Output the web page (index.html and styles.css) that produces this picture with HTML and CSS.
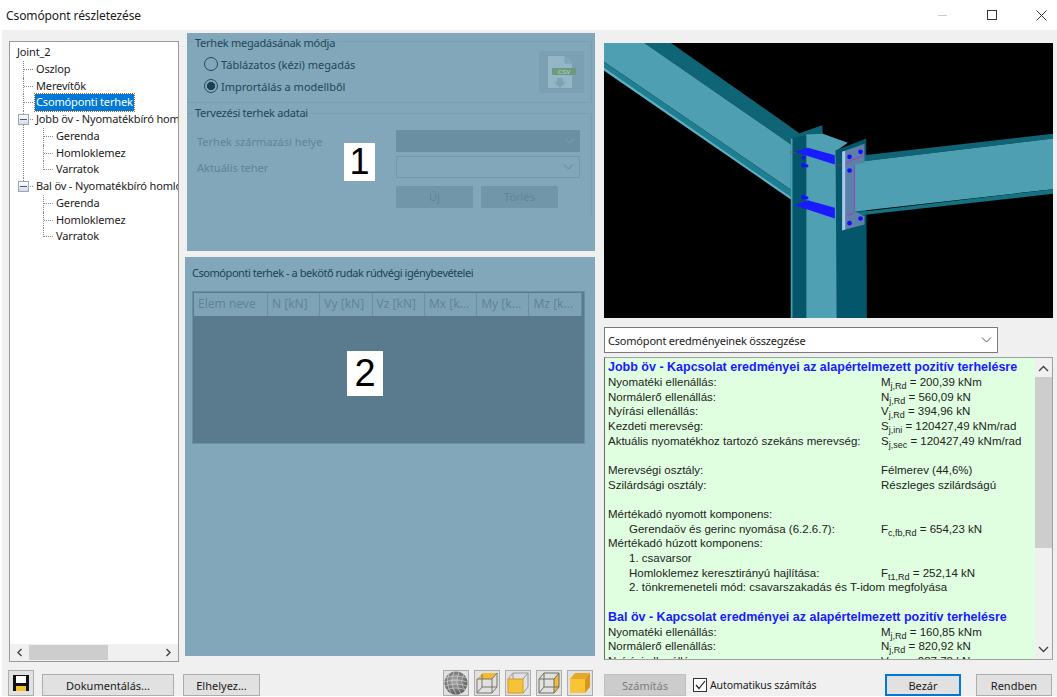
FILE: index.html
```html
<!DOCTYPE html>
<html lang="en">
<head>
    <meta charset="UTF-8">
    <title>Csomópont részletezése</title>
    <link rel="stylesheet" href="styles.css">
</head>
<body>
    <header class="titlebar">
        <span class="title">Csomópont részletezése</span>
        <div class="winbtns">
            <span class="minimize"></span>
            <span class="maximize"></span>
            <svg class="close" width="11" height="11" viewBox="0 0 11 11"><path d="M0.5 0.5L10.5 10.5M10.5 0.5L0.5 10.5" stroke="#333" fill="none"/></svg>
        </div>
    </header>

    <div class="client">
        <div class="main">
            <div class="tree">
                <div class="tree-list">
                    <div class="root">Joint_2</div>
                    <ul class="branch">
                        <li><span class="node">Oszlop</span></li>
                        <li><span class="node">Merevítők</span></li>
                        <li><span class="node selected">Csomóponti terhek</span></li>
                        <li>
                            <span class="expander"></span>
                            <span class="node">Jobb öv - Nyomatékbíró homloklemezes</span>
                            <ul class="subbranch">
                                <li><span class="node">Gerenda</span></li>
                                <li><span class="node">Homloklemez</span></li>
                                <li><span class="node">Varratok</span></li>
                            </ul>
                        </li>
                        <li>
                            <span class="expander"></span>
                            <span class="node">Bal öv - Nyomatékbíró homloklemezes</span>
                            <ul class="subbranch">
                                <li><span class="node">Gerenda</span></li>
                                <li><span class="node">Homloklemez</span></li>
                                <li><span class="node">Varratok</span></li>
                            </ul>
                        </li>
                    </ul>
                </div>
                <div class="hscroll">
                    <svg width="7" height="9" viewBox="0 0 7 9"><path d="M5.5 1L2 4.5L5.5 8" stroke="#444" stroke-width="1.4" fill="none"/></svg>
                    <div class="hthumb"></div>
                    <svg width="7" height="9" viewBox="0 0 7 9"><path d="M1.5 1L5 4.5L1.5 8" stroke="#444" stroke-width="1.4" fill="none"/></svg>
                </div>
            </div>

            <div class="middle">
                <section class="panel panel-one">
                    <div class="group group-mode">
                        <span class="legend">Terhek megadásának módja</span>
                        <div class="mode-row">
                            <div class="radios">
                                <div class="radio-row"><span class="radio"></span>Táblázatos (kézi) megadás</div>
                                <div class="radio-row"><span class="radio checked"></span>Imprortálás a modellből</div>
                            </div>
                            <div class="csv-btn">
                                <svg width="30" height="34" viewBox="0 0 30 34">
                                    <path d="M1 1H18L25 8V33H1Z" fill="#94b6c6"/>
                                    <path d="M18 1V8H25" fill="#82a7ba" stroke="#7ba0b3"/>
                                    <rect x="5" y="13" width="24" height="7" fill="#6d9a7f"/>
                                    <text x="17" y="19" class="csv-text">CSV</text>
                                    <path d="M10 23H16V27H19L13 33L7 27H10Z" fill="#7ea3b5"/>
                                </svg>
                            </div>
                        </div>
                    </div>
                    <div class="group group-data">
                        <span class="legend">Tervezési terhek adatai</span>
                        <div class="form-row">
                            <span class="form-label">Terhek származási helye</span>
                            <div class="fake-select filled"><svg width="11" height="6" viewBox="0 0 11 6"><path d="M1 0.5L5.5 5L10 0.5" stroke="#7f9fb0" fill="none"/></svg></div>
                        </div>
                        <div class="form-row">
                            <span class="form-label">Aktuális teher</span>
                            <div class="fake-select outlined"><svg width="11" height="6" viewBox="0 0 11 6"><path d="M1 0.5L5.5 5L10 0.5" stroke="#5f8496" fill="none"/></svg></div>
                        </div>
                        <div class="form-btns">
                            <span class="dim-btn">Új</span>
                            <span class="dim-btn">Törlés</span>
                        </div>
                    </div>
                    <div class="callout callout-one">1</div>
                </section>

                <section class="panel panel-two">
                    <div class="panel-title">Csomóponti terhek - a bekötő rudak rúdvégi igénybevételei</div>
                    <div class="grid-box">
                        <div class="grid-head">
                            <span class="col-name">Elem neve</span>
                            <span>N [kN]</span>
                            <span>Vy [kN]</span>
                            <span>Vz [kN]</span>
                            <span>Mx [k...</span>
                            <span>My [k...</span>
                            <span>Mz [k...</span>
                        </div>
                    </div>
                    <div class="callout callout-two">2</div>
                </section>
            </div>

            <div class="right">
                <div class="viewport">
                    <svg width="449" height="275" viewBox="14 26 1346 824">
                        <rect x="14" y="26" width="1346" height="824" fill="#000"/>
                        <!-- left beam -->
                        <polygon points="135,26 215,26 600,296 578,332" fill="#0f6475"/>
                        <polygon points="14,26 135,26 578,332 578,468 14,82" fill="#4d9fb1"/>
                        <polygon points="14,82 578,468 578,497 14,108" fill="#1f7f92"/>
                        <polygon points="14,100 578,490 578,497 14,108" fill="#5fb0c0"/>
                        <!-- column -->
                        <polygon points="582,310 600,296 668,272 670,302 620,306" fill="#0d6474"/>
                        <polygon points="620,300 670,298 745,325 712,348 712,850 620,850" fill="#4fa0b2"/>
                        <polygon points="574,312 620,302 620,850 574,850" fill="#04566a"/>
                        <rect x="574" y="312" width="5" height="538" fill="#4d9fb1"/>
                        <polygon points="708,348 800,312 802,850 712,850" fill="#04566a"/>
                        <!-- right beam -->
                        <polygon points="760,366 1360,298 1360,312 760,384" fill="#0f6475"/>
                        <polygon points="760,384 1360,312 1360,464 760,532" fill="#4d9fb1"/>
                        <polygon points="750,536 1360,464 1360,478 750,546" fill="#15707f"/>
                        <!-- end plate -->
                        <polygon points="728,352 795,328 795,385 765,390 765,530 795,545 795,570 728,588" fill="#5d80a8"/>
                        <polygon points="728,352 737,349 737,585 728,588" fill="#a9c8f0"/>
                        <path d="M765 392V528M740 384L800 360M742 543L765 535" stroke="#c020d0" stroke-width="2" fill="none"/>
                        <path d="M574 352L590 356M706 391L728 392" stroke="#b03040" stroke-width="2" fill="none"/>
                        <!-- stiffeners and bolts -->
                        <polygon points="585,352 625,340 706,362 706,390" fill="#1a1aff"/>
                        <polygon points="585,512 625,497 706,520 706,552" fill="#1a1aff"/>
                        <g fill="#1010ff">
                            <circle cx="750" cy="367" r="7"/>
                            <circle cx="783" cy="352" r="7"/>
                            <circle cx="750" cy="408" r="7"/>
                            <circle cx="750" cy="566" r="7"/>
                            <circle cx="783" cy="552" r="7"/>
                            <circle cx="612" cy="392" r="7"/>
                            <circle cx="622" cy="394" r="5"/>
                            <circle cx="612" cy="488" r="7"/>
                            <circle cx="622" cy="490" r="5"/>
                            <circle cx="612" cy="370" r="6"/>
                        </g>
                    </svg>
                </div>
                <div class="combo">
                    <span>Csomópont eredményeinek összegzése</span>
                    <svg width="11" height="6" viewBox="0 0 11 6"><path d="M1 0.5L5.5 5L10 0.5" stroke="#555" fill="none"/></svg>
                </div>
                <div class="results">
                    <div class="results-text">
                        <div class="res-head">Jobb öv - Kapcsolat eredményei az alapértelmezett pozitív terhelésre</div>
                        <div class="res-row"><span class="res-label">Nyomatéki ellenállás:</span><span>M<sub>j,Rd</sub> = 200,39 kNm</span></div>
                        <div class="res-row"><span class="res-label">Normálerő ellenállás:</span><span>N<sub>j,Rd</sub> = 560,09 kN</span></div>
                        <div class="res-row"><span class="res-label">Nyírási ellenállás:</span><span>V<sub>j,Rd</sub> = 394,96 kN</span></div>
                        <div class="res-row"><span class="res-label">Kezdeti merevség:</span><span>S<sub>j,ini</sub> = 120427,49 kNm/rad</span></div>
                        <div class="res-row"><span class="res-label">Aktuális nyomatékhoz tartozó szekáns merevség:</span><span>S<sub>j,sec</sub> = 120427,49 kNm/rad</span></div>
                        <div class="res-row"></div>
                        <div class="res-row"><span class="res-label">Merevségi osztály:</span><span>Félmerev (44,6%)</span></div>
                        <div class="res-row"><span class="res-label">Szilárdsági osztály:</span><span>Részleges szilárdságú</span></div>
                        <div class="res-row"></div>
                        <div class="res-row"><span class="res-label">Mértékadó nyomott komponens:</span></div>
                        <div class="res-row"><span class="res-label indent">Gerendaöv és gerinc nyomása (6.2.6.7):</span><span>F<sub>c,fb,Rd</sub> = 654,23 kN</span></div>
                        <div class="res-row"><span class="res-label">Mértékadó húzott komponens:</span></div>
                        <div class="res-row"><span class="res-label indent">1. csavarsor</span></div>
                        <div class="res-row"><span class="res-label indent">Homloklemez keresztirányú hajlítása:</span><span>F<sub>t1,Rd</sub> = 252,14 kN</span></div>
                        <div class="res-row"><span class="indent">2. tönkremeneteli mód: csavarszakadás és T-idom megfolyása</span></div>
                        <div class="res-row"></div>
                        <div class="res-head">Bal öv - Kapcsolat eredményei az alapértelmezett pozitív terhelésre</div>
                        <div class="res-row"><span class="res-label">Nyomatéki ellenállás:</span><span>M<sub>j,Rd</sub> = 160,85 kNm</span></div>
                        <div class="res-row"><span class="res-label">Normálerő ellenállás:</span><span>N<sub>j,Rd</sub> = 820,92 kN</span></div>
                        <div class="res-row"><span class="res-label">Nyírási ellenállás:</span><span>V<sub>j,Rd</sub> = 287,78 kN</span></div>
                    </div>
                    <div class="vscroll">
                        <svg width="11" height="7" viewBox="0 0 11 7"><path d="M1 6L5.5 1.5L10 6" stroke="#444" stroke-width="1.4" fill="none"/></svg>
                        <div class="vthumb"></div>
                        <div class="vtrack"></div>
                        <svg width="11" height="7" viewBox="0 0 11 7"><path d="M1 1L5.5 5.5L10 1" stroke="#444" stroke-width="1.4" fill="none"/></svg>
                    </div>
                </div>
            </div>
        </div>

        <footer class="bottombar">
            <div class="bar-left">
                <span class="icon-btn">
                    <svg width="16" height="16" viewBox="0 0 16 16">
                        <path d="M0 0H16V16H0Z" fill="#111"/>
                        <rect x="3" y="1" width="10" height="7" fill="#fff"/>
                        <rect x="3" y="11" width="10" height="5" fill="#f2c230"/>
                    </svg>
                </span>
                <button class="btn btn-doc">Dokumentálás...</button>
                <button class="btn btn-place">Elhelyez...</button>
            </div>
            <div class="bar-icons">
                <span class="icon-btn">
                    <svg width="24" height="24" viewBox="0 0 24 24">
                        <defs>
                            <radialGradient id="ball" cx="0.45" cy="0.4" r="0.65">
                                <stop offset="0" stop-color="#a8a8a8"/>
                                <stop offset="1" stop-color="#5a5a5a"/>
                            </radialGradient>
                        </defs>
                        <circle cx="12" cy="12" r="11.5" fill="url(#ball)"/>
                        <path d="M1 7Q12 3 23 7M0.5 11Q12 7 23.5 11M1 15Q12 11 23 15M2 19Q12 15 22 19M5 3Q1 12 7 22M10 1Q5 12 12 23M15 1Q10 12 17 23M20 3Q15 12 21 19" stroke="#dcdcdc" stroke-width="0.6" fill="none"/>
                    </svg>
                </span>
                <span class="icon-btn">
                    <svg width="22" height="22" viewBox="0 0 22 22">
                        <polygon points="1,7 7,1 21,1 16,7" fill="#f2b933"/>
                        <path d="M1 7H16V21H1ZM16 7L21 1V15L16 21M6 7V2M6 15H21M1 21L6 15V7" stroke="#77776c" fill="none"/>
                    </svg>
                </span>
                <span class="icon-btn">
                    <svg width="22" height="22" viewBox="0 0 22 22">
                        <path d="M6 1H21V15L16 21M6 1L1 7M6 1V7M16 7L21 1" stroke="#999" fill="none"/>
                        <rect x="1" y="7" width="15" height="14" fill="#f5c33b" stroke="#d69a1c"/>
                    </svg>
                </span>
                <span class="icon-btn">
                    <svg width="22" height="22" viewBox="0 0 22 22">
                        <polygon points="16,7 21,1 21,15 16,21" fill="#f2b933"/>
                        <path d="M1 7H16V21H1ZM1 7L6 1H21L16 7M21 1V15L16 21M6 1V15H21M1 21L6 15" stroke="#6e6e64" fill="none"/>
                    </svg>
                </span>
                <span class="icon-btn">
                    <svg width="22" height="22" viewBox="0 0 22 22">
                        <polygon points="1,7 6,1 21,1 16,7" fill="#e8a825"/>
                        <polygon points="16,7 21,1 21,15 16,21" fill="#d9961a"/>
                        <rect x="1" y="7" width="15" height="14" fill="#f7c535"/>
                    </svg>
                </span>
            </div>
            <div class="bar-calc">
                <button class="btn btn-calc">Számítás</button>
                <span class="checkbox">
                    <svg width="11" height="10" viewBox="0 0 11 10"><path d="M1 5L4 8.5L10 1" stroke="#222" stroke-width="1.2" fill="none"/></svg>
                </span>
                <span class="check-label">Automatikus számítás</span>
            </div>
            <div class="bar-right">
                <button class="btn btn-close">Bezár</button>
                <button class="btn btn-ok">Rendben</button>
            </div>
        </footer>
    </div>
</body>
</html>
```

FILE: styles.css
```css
* {
    box-sizing: border-box;
}
body {
    margin: 0;
    background: #fff;
    color: #1a1a1a;
    font-family: "Noto Sans", sans-serif;
    font-size: 11px;
    overflow: hidden;
}
ul {
    list-style: none;
    margin: 0;
    padding: 0;
}

/* title bar */
.titlebar {
    height: 30px;
    display: flex;
    align-items: center;
    justify-content: space-between;
    padding: 0 10px 0 6px;
    font-size: 12px;
    letter-spacing: -0.1px;
}
.winbtns {
    display: flex;
    align-items: center;
}
.minimize {
    width: 9px;
    height: 1px;
    background: #ccc;
    margin-right: 40px;
}
.maximize {
    width: 10px;
    height: 10px;
    border: 1px solid #333;
    margin-right: 39px;
}

.client {
    height: 666px;
    margin-left: 2px;
    background: #f0f0f0;
    padding-left: 7px;
    display: flex;
    flex-direction: column;
}
.main {
    height: 639px;
    display: flex;
    align-items: flex-start;
}

/* tree */
.tree {
    width: 170px;
    height: 621px;
    margin-top: 11px;
    background: #fff;
    border: 1px solid #9a9a9a;
    display: flex;
    flex-direction: column;
}
.tree-list {
    flex: 1;
    overflow: hidden;
    white-space: nowrap;
    padding-top: 2px;
    line-height: 16.75px;
    letter-spacing: -0.15px;
}
.root {
    padding-left: 7px;
}
.branch {
    margin-left: 13px;
}
.subbranch {
    margin-left: 8px;
}
.tree li {
    position: relative;
    padding-left: 12px;
}
.tree li::before {
    content: "";
    position: absolute;
    left: 0;
    top: 0;
    bottom: 0;
    border-left: 1px dotted #888;
}
.tree li:last-child::before {
    bottom: auto;
    height: 9px;
}
.tree li::after {
    content: "";
    position: absolute;
    left: 1px;
    top: 8px;
    width: 9px;
    border-top: 1px dotted #888;
}
.node {
    display: inline-block;
    height: 16.75px;
    padding: 0 1px;
}
.selected {
    background: #0078d7;
    color: #fff;
    outline: 1px dotted #b8672a;
}
.expander {
    position: absolute;
    z-index: 1;
    left: -5px;
    top: 3px;
    width: 11px;
    height: 11px;
    background: linear-gradient(#fff, #d5dbe6);
    border: 1px solid #9aa5b8;
}
.expander::after {
    content: "";
    position: absolute;
    left: 1px;
    top: 4px;
    width: 7px;
    height: 1px;
    background: #4a5a78;
}
.hscroll {
    height: 17px;
    display: flex;
    align-items: center;
    justify-content: space-between;
    padding: 0 6px;
    gap: 6px;
    background: #f0f0f0;
}
.hthumb {
    height: 15px;
    background: #cdcdcd;
    width: 79px;
    margin-right: auto;
}

/* middle column */
.middle {
    width: 410px;
    margin-left: 6px;
    padding-top: 3px;
}
.panel {
    position: relative;
    background: #82a7ba;
}
.panel-one {
    height: 218px;
    margin-left: 2px;
    padding-top: 8px;
}
.panel-two {
    height: 399px;
    margin-top: 6px;
    padding: 8px 10px 0 7px;
}
.group {
    position: relative;
    border: 1px solid #7a9fb2;
    border-left: 0;
    margin-right: 3px;
}
.group-mode {
    height: 62px;
}
.group-data {
    margin-top: 10px;
    border-bottom: 0;
    height: 104px;
    padding: 16px 0 0 10px;
}
.legend {
    position: absolute;
    left: 6px;
    top: -7px;
    padding: 0 2px;
    line-height: 16px;
    letter-spacing: -0.25px;
    color: #1d4659;
    background: #82a7ba;
}
.group-data .legend {
    top: -9px;
}
.mode-row {
    display: flex;
    justify-content: space-between;
    padding: 11px 7px 0 17px;
}
.radio-row {
    display: flex;
    align-items: center;
    height: 22px;
    color: #1d4659;
}
.radio {
    width: 14px;
    height: 14px;
    border: 1px solid #24495c;
    border-radius: 50%;
    margin-right: 3px;
}
.radio.checked {
    background: radial-gradient(circle, #1d3f52 0 3.8px, transparent 4.4px);
}
.csv-btn {
    width: 45px;
    height: 42px;
    margin-top: -2px;
    background: #7ba0b3;
    display: flex;
    align-items: center;
    justify-content: center;
}
.csv-text {
    font-family: "Liberation Sans", sans-serif;
    font-size: 6px;
    font-weight: bold;
    text-anchor: middle;
    fill: #a9c9b4;
}
.form-row {
    display: flex;
    align-items: center;
    justify-content: space-between;
    height: 22px;
    margin-bottom: 4px;
    padding-right: 11px;
    color: #5f8496;
}
.fake-select {
    width: 184px;
    height: 22px;
    display: flex;
    align-items: center;
    justify-content: flex-end;
    padding-right: 5px;
}
.fake-select.filled {
    background: #6a8fa2;
}
.fake-select.outlined {
    border: 1px solid #7598aa;
}
.form-btns {
    display: flex;
    gap: 8px;
    margin: 8px 0 0 199px;
}
.dim-btn {
    width: 77px;
    height: 22px;
    line-height: 22px;
    text-align: center;
    background: #7296a9;
    color: #5f8496;
}
.callout {
    position: absolute;
    background: #fff;
    color: #000;
    font-family: "Liberation Sans", sans-serif;
    text-align: center;
}
.callout-one {
    left: 157px;
    top: 110px;
    width: 31px;
    height: 38px;
    font-size: 36px;
    line-height: 38px;
}
.callout-two {
    left: 162px;
    top: 94px;
    width: 36px;
    height: 45px;
    font-size: 38px;
    line-height: 45px;
}
.panel-title {
    line-height: 16px;
    letter-spacing: -0.45px;
    color: #1a4357;
}
.grid-box {
    height: 153px;
    margin-top: 10px;
    background: #5a7b8e;
    border: 1px solid #6c8ea1;
    padding: 1px 0 0 1px;
}
.grid-head {
    display: flex;
    width: 388px;
    height: 23px;
    background: #7fa3b6;
    color: #5f8496;
    font-size: 12px;
    line-height: 22px;
}
.grid-head span {
    width: 52.3px;
    padding-left: 4px;
    border-right: 1px solid #6c8ea1;
    white-space: nowrap;
    overflow: hidden;
}
.grid-head .col-name {
    width: 74px;
}

/* right column */
.right {
    width: 449px;
    margin-left: 9px;
    padding-top: 13px;
}
.viewport {
    height: 275px;
    background: #000;
}
.viewport svg {
    display: block;
}
.combo {
    width: 394px;
    height: 26px;
    margin-top: 9px;
    background: #fff;
    border: 1px solid #7a7a7a;
    display: flex;
    align-items: center;
    justify-content: space-between;
    padding: 0 5px 0 3px;
    letter-spacing: -0.2px;
}
.results {
    height: 303px;
    margin-top: 4px;
    display: flex;
    background: #e0ffe0;
    border: 1px solid #a0a0a0;
    border-left-color: #696969;
    font-family: "Liberation Sans", sans-serif;
    font-size: 11.5px;
    overflow: hidden;
}
.results-text {
    flex: 1;
    padding: 2px 0 0 3px;
    overflow: hidden;
    color: #222;
}
.res-head {
    font-weight: bold;
    font-size: 12.5px;
    line-height: 15px;
    color: #1a1aff;
    white-space: nowrap;
}
.res-row {
    display: flex;
    height: 14.67px;
    line-height: 14.67px;
    white-space: nowrap;
}
.res-label {
    width: 273px;
}
.indent {
    padding-left: 21px;
}
sub {
    font-size: 9px;
    line-height: 0;
}
.vscroll {
    width: 17px;
    background: #f0f0f0;
    display: flex;
    flex-direction: column;
    align-items: center;
    padding: 7px 0 6px;
}
.vthumb {
    width: 17px;
    height: 171px;
    margin-top: 5px;
    background: #cdcdcd;
}
.vtrack {
    flex: 1;
}

/* bottom bar */
.bottombar {
    height: 27px;
    display: flex;
    align-items: flex-end;
    padding-right: 5px;
}
.bar-left {
    width: 435px;
    margin-left: -1px;
    display: flex;
    align-items: flex-end;
}
.btn {
    height: 22px;
    font-family: "Noto Sans", sans-serif;
    font-size: 11px;
    color: #1a1a1a;
    background: #e1e1e1;
    border: 1px solid #adadad;
    padding: 0;
}
.btn-doc {
    width: 132px;
    margin-left: 8px;
}
.btn-place {
    width: 77px;
    margin-left: 9px;
}
.icon-btn {
    width: 26px;
    height: 26px;
    background: #e1e1e1;
    border: 1px solid #adadad;
    display: flex;
    align-items: center;
    justify-content: center;
}
.bar-icons {
    display: flex;
    gap: 5px;
}
.bar-calc {
    display: flex;
    align-items: center;
    margin-left: 11px;
}
.btn-calc {
    width: 82px;
    background: #cccccc;
    border-color: #bfbfbf;
    color: #7d7d7d;
}
.checkbox {
    width: 14px;
    height: 14px;
    margin: 0 3px 0 7px;
    background: #fff;
    border: 1px solid #333;
    display: flex;
    align-items: center;
    justify-content: center;
}
.check-label {
    font-size: 10.5px;
    letter-spacing: -0.1px;
}
.bar-right {
    display: flex;
    gap: 15px;
    margin-left: auto;
}
.btn-close,
.btn-ok {
    width: 76px;
}
.btn-close {
    border: 2px solid #0078d7;
}
```
